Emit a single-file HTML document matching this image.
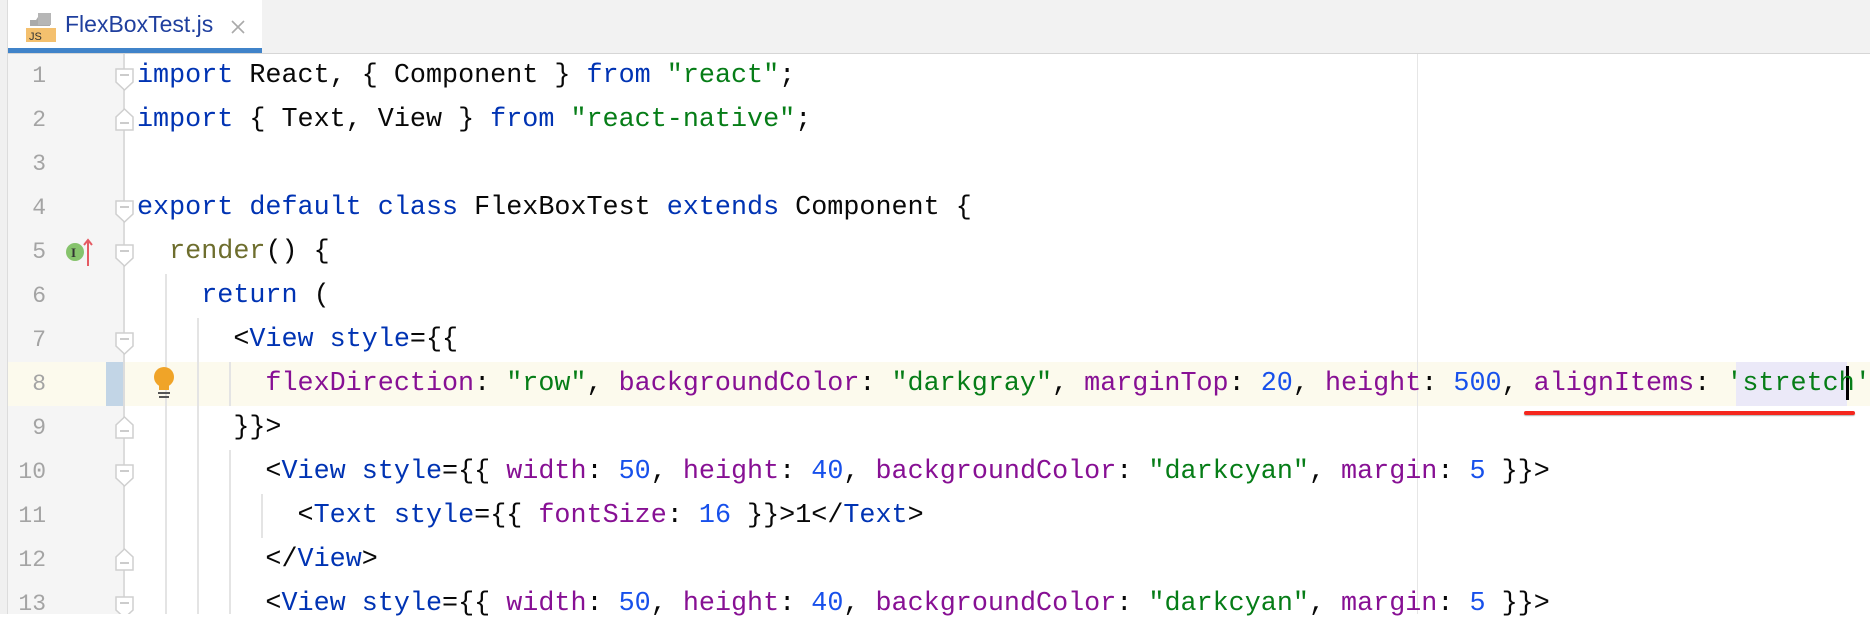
<!DOCTYPE html>
<html><head><meta charset="utf-8"><style>
*{margin:0;padding:0;box-sizing:border-box}
body{width:1870px;height:614px;overflow:hidden;background:#fff;position:relative;font-family:"Liberation Mono",monospace}
.tabbar{position:absolute;left:0;top:0;width:1870px;height:54px;background:#f2f2f2;border-bottom:1px solid #d6d6d6}
.tab{position:absolute;left:8px;top:0;width:254px;height:53px;background:#fff;border-bottom:5px solid #4083c9}
.tabtxt{position:absolute;left:57px;top:11px;font:23px "Liberation Sans",sans-serif;color:#1f3f9e}
.edge{position:absolute;left:0;top:0;width:8px;height:614px;background:#f0f0f0;border-right:1px solid #dcdcdc}
.gutter{position:absolute;left:8px;top:54px;width:116px;height:560px;background:#f5f5f5}
.fold{position:absolute;left:123px;top:54px;width:2px;height:560px;background:#dcdcdc}
.hl{position:absolute;left:8px;top:362px;width:1862px;height:44px;background:#fcfaed}
.ln{position:absolute;left:8px;width:38px;text-align:right;font-size:23px;color:#a4a4a4;line-height:44px}
.code{position:absolute;left:137px;font-size:26.75px;line-height:44px;white-space:pre;color:#080808}
.k{color:#0033b3}.s{color:#067d17}.n{color:#1750eb}.p{color:#871094}.f{color:#6e6e2e}
.guide{position:absolute;width:2px;background:#e4e4e4}
.rm{position:absolute;left:1417px;top:54px;width:1px;height:560px;background:#e6e6e6}
</style></head><body>
<div class="tabbar"></div>
<div class="tab">
<svg style="position:absolute;left:18px;top:12px" width="32" height="30"><polygon points="10,8 14,2 14,8" fill="#aaa"/><rect x="4" y="8" width="20" height="6" fill="#aaa"/><rect x="12" y="1" width="13" height="12" fill="#b6b6b6"/><rect x="0" y="16" width="30" height="14" fill="#f4c06e"/><text x="3" y="28" font-family="Liberation Sans" font-size="11" fill="#333">JS</text></svg>
<div class="tabtxt">FlexBoxTest.js</div>
<svg style="position:absolute;left:222px;top:19px" width="16" height="16"><path d="M2 2L14 14M14 2L2 14" stroke="#aaa" stroke-width="1.6"/></svg>
</div>
<div class="edge"></div>
<div class="gutter"></div>
<div class="hl"></div>
<div style="position:absolute;left:106px;top:362px;width:18px;height:44px;background:#c2d5e6"></div>
<div class="fold"></div>
<div class="rm"></div>
<div class="guide" style="left:165px;top:274px;height:340px"></div>
<div class="guide" style="left:197px;top:318px;height:296px"></div>
<div class="guide" style="left:229px;top:362px;height:44px"></div>
<div class="guide" style="left:229px;top:450px;height:164px"></div>
<div class="guide" style="left:261px;top:494px;height:44px"></div>
<!-- selection -->
<div style="position:absolute;left:1736px;top:362px;width:111px;height:44px;background:#ebe9f8"></div>
<div style="position:absolute;left:1846px;top:366px;width:3px;height:34px;background:#000"></div>
<div style="position:absolute;left:1524px;top:411px;width:331px;height:4px;background:#f5261d;border-radius:2px;box-shadow:0 1px 1px rgba(0,0,0,.3)"></div>
<!-- line numbers -->
<div class="ln" style="top:54px">1<br>2<br>3<br>4<br>5<br>6<br>7<br>8<br>9<br>10<br>11<br>12<br>13</div>
<!-- fold markers -->
<svg style="position:absolute;left:114px;top:54px" width="24" height="560">
<g fill="#fff" stroke="#cfcfcf" stroke-width="1.5">
<path d="M2 15h17v13l-8.5 8l-8.5-8z"/>
<path d="M2 76h17v-13l-8.5-8l-8.5 8z"/>
<path d="M2 147h17v13l-8.5 8l-8.5-8z"/>
<path d="M2 191h17v13l-8.5 8l-8.5-8z"/>
<path d="M2 279h17v13l-8.5 8l-8.5-8z"/>
<path d="M2 384h17v-13l-8.5-8l-8.5 8z"/>
<path d="M2 411h17v13l-8.5 8l-8.5-8z"/>
<path d="M2 516h17v-13l-8.5-8l-8.5 8z"/>
<path d="M2 543h17v13l-8.5 8l-8.5-8z"/>
</g>
<g stroke="#bbb" stroke-width="1.5"><path d="M6 21h9M6 69h9M6 153h9M6 197h9M6 285h9M6 377h9M6 417h9M6 509h9M6 549h9"/></g>
</svg>
<!-- line 5 icons -->
<svg style="position:absolute;left:64px;top:236px" width="30" height="32"><circle cx="11" cy="16" r="9" fill="#86c36c"/><text x="7" y="21" font-family="Liberation Serif" font-size="13" font-weight="bold" fill="#333">I</text><path d="M24 30V4M20 9l4-5 4 5" stroke="#e55b63" stroke-width="2" fill="none"/></svg>
<!-- bulb -->
<svg style="position:absolute;left:152px;top:364px" width="24" height="40"><circle cx="12" cy="13" r="10" fill="#f0a428"/><rect x="7" y="20" width="10" height="6" fill="#f0a428"/><path d="M6 29h12M7 33h10" stroke="#555" stroke-width="2"/></svg>
<div class="code" style="top:54px"><span class="k">import</span> React, { Component } <span class="k">from</span> <span class="s">"react"</span>;
<span class="k">import</span> { Text, View } <span class="k">from</span> <span class="s">"react-native"</span>;

<span class="k">export default class</span> FlexBoxTest <span class="k">extends</span> Component {
  <span class="f">render</span>() {
    <span class="k">return</span> (
      &lt;<span class="k">View</span> <span class="k">style</span>={{
        <span class="p">flexDirection</span>: <span class="s">"row"</span>, <span class="p">backgroundColor</span>: <span class="s">"darkgray"</span>, <span class="p">marginTop</span>: <span class="n">20</span>, <span class="p">height</span>: <span class="n">500</span>, <span class="p">alignItems</span>: <span class="s">'stretch'</span>,
      }}&gt;
        &lt;<span class="k">View</span> <span class="k">style</span>={{ <span class="p">width</span>: <span class="n">50</span>, <span class="p">height</span>: <span class="n">40</span>, <span class="p">backgroundColor</span>: <span class="s">"darkcyan"</span>, <span class="p">margin</span>: <span class="n">5</span> }}&gt;
          &lt;<span class="k">Text</span> <span class="k">style</span>={{ <span class="p">fontSize</span>: <span class="n">16</span> }}&gt;1&lt;/<span class="k">Text</span>&gt;
        &lt;/<span class="k">View</span>&gt;
        &lt;<span class="k">View</span> <span class="k">style</span>={{ <span class="p">width</span>: <span class="n">50</span>, <span class="p">height</span>: <span class="n">40</span>, <span class="p">backgroundColor</span>: <span class="s">"darkcyan"</span>, <span class="p">margin</span>: <span class="n">5</span> }}&gt;</div>
</body></html>
